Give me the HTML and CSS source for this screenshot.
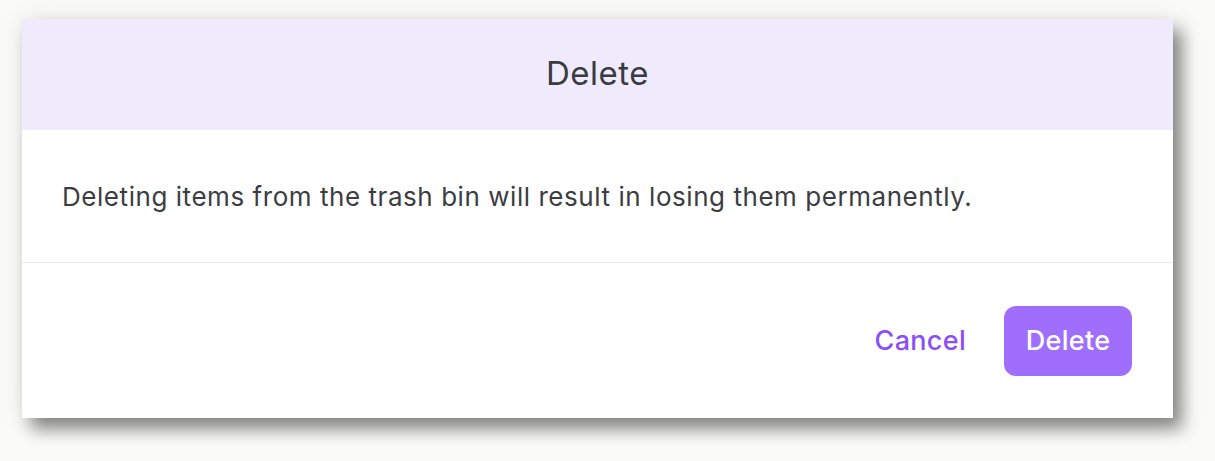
FILE: index.html
```html
<!DOCTYPE html>
<html lang="en">
<head>
    <meta charset="UTF-8">
    <meta name="viewport" content="width=device-width, initial-scale=1.0">
    <title>Delete</title>
    <link rel="stylesheet" href="styles.css">
</head>
<body>
    <div class="dialog">
        <div class="dialog-header">
            <h1>Delete</h1>
        </div>
        <div class="dialog-body">
            <p>Deleting items from the trash bin will result in losing them permanently.</p>
        </div>
        <div class="dialog-footer">
            <button class="link">Cancel</button>
            <button class="primary">Delete</button>
        </div>
    </div>
</body>
</html>
```

FILE: styles.css
```css
body {
    font-family: Inter, 'Noto Sans', sans-serif;
    margin: 0;
    padding: 19px 0 43px 22px;
    background-color: #fafaf8;
    color: #3b3d42;
}
.dialog {
    width: 1151px;
    background-color: #fff;
    box-shadow: 9px 11px 16px rgba(0, 0, 0, 0.45), 0 0 26px rgba(0, 0, 0, 0.08);
}
.dialog-header {
    height: 111px;
    background-color: #efebfd;
    display: flex;
    align-items: center;
    justify-content: center;
}
.dialog-header h1 {
    margin: 0 0 4px;
    font-size: 33px;
    font-weight: 400;
    letter-spacing: 0.5px;
    color: #3a3b40;
}
.dialog-body {
    height: 132px;
    display: flex;
    align-items: center;
    padding: 0 40px;
    border-bottom: 1px solid #ebebee;
}
.dialog-body p {
    margin: 0;
    font-size: 26px;
    letter-spacing: 0.55px;
}
.dialog-footer {
    height: 155px;
    display: flex;
    align-items: center;
    justify-content: flex-end;
    gap: 14px;
    padding: 0 41px;
}
button {
    font-family: inherit;
    font-size: 27px;
    font-weight: 500;
    letter-spacing: 0.3px;
    border: none;
    cursor: pointer;
}
button.link {
    background: none;
    color: #8b4ff5;
    padding: 0 24px;
}
button.primary {
    background-color: #9f6efc;
    color: #fff;
    width: 128px;
    height: 70px;
    border-radius: 12px;
}
```
